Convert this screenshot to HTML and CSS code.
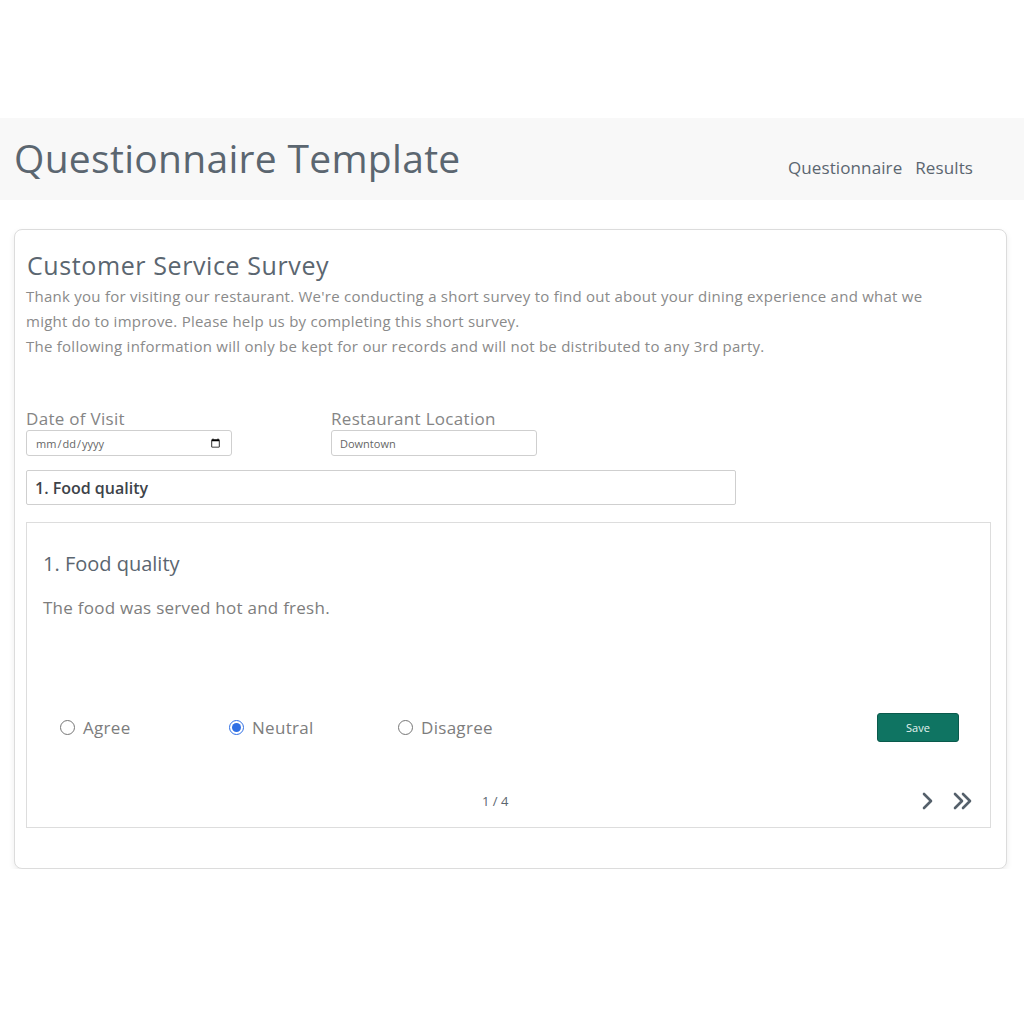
FILE: index.html
```html
<!DOCTYPE html>
<html lang="en">
<head>
<meta charset="utf-8">
<title>Questionnaire Template</title>
<link rel="stylesheet" href="styles.css">
</head>
<body>
<header class="topbar">
  <h1 class="brand">Questionnaire Template</h1>
  <nav class="nav">
    <a class="nav-link" href="#">Questionnaire</a>
    <a class="nav-link" href="#">Results</a>
  </nav>
</header>
<main class="card">
  <h2 class="survey-title">Customer Service Survey</h2>
  <p class="intro">Thank you for visiting our restaurant. We're conducting a short survey to find out about your dining experience and what we might do to improve. Please help us by completing this short survey.<br>The following information will only be kept for our records and will not be distributed to any 3rd party.</p>
  <div class="fields">
    <label class="field">
      <span class="field-label">Date of Visit</span>
      <input class="field-input" type="date">
    </label>
    <label class="field">
      <span class="field-label">Restaurant Location</span>
      <input class="field-input" type="text" value="Downtown">
    </label>
  </div>
  <div class="section-select">1. Food quality</div>
  <section class="question">
    <h3 class="q-title">1. Food quality</h3>
    <p class="q-text">The food was served hot and fresh.</p>
    <div class="answers">
      <label class="option"><input type="radio" name="a"><span>Agree</span></label>
      <label class="option"><input type="radio" name="a" checked><span>Neutral</span></label>
      <label class="option"><input type="radio" name="a"><span>Disagree</span></label>
      <button class="save" type="button">Save</button>
    </div>
    <div class="pager">
      <span class="page-count">1 / 4</span>
      <div class="pager-icons">
        <svg class="chev" width="14" height="20" viewBox="0 0 14 20"><path d="M3 3 L10 10 L3 17" fill="none" stroke="#55606b" stroke-width="2.6" stroke-linecap="round" stroke-linejoin="round"/></svg>
        <svg class="chev" width="22" height="20" viewBox="0 0 22 20"><path d="M3 3 L10 10 L3 17 M11 3 L18 10 L11 17" fill="none" stroke="#55606b" stroke-width="2.6" stroke-linecap="round" stroke-linejoin="round"/></svg>
      </div>
    </div>
  </section>
</main>
</body>
</html>
```
FILE: styles.css
```css
* { box-sizing: border-box; }
body {
  margin: 0;
  padding-top: 118px;
  background: #ffffff;
  font-family: "Open Sans", "DejaVu Sans", sans-serif;
  color: #5b6670;
}
.topbar {
  height: 82px;
  background: #f8f8f8;
  display: flex;
  align-items: center;
  justify-content: space-between;
  padding: 0 51px 0 14px;
}
.brand {
  margin: 0;
  font-size: 39px;
  font-weight: 500;
  color: #5b6670;
  letter-spacing: 0.3px;
  position: relative;
  top: -2px;
}
.nav {
  display: flex;
  gap: 13px;
  padding-top: 16px;
}
.nav-link {
  color: #5b6670;
  text-decoration: none;
  font-size: 17px;
  letter-spacing: 0.1px;
}
.card {
  margin: 29px 17px 0 14px;
  height: 640px;
  border: 1px solid #dcdcdc;
  border-radius: 8px;
  box-shadow: 0 3px 6px rgba(0,0,0,0.08);
  padding: 20px 15px 0 11px;
  background: #fff;
}
.survey-title {
  margin: 0 0 4px 1px;
  font-size: 25px;
  line-height: 30px;
  font-weight: 500;
  color: #5b6670;
  letter-spacing: 0.6px;
}
.intro {
  margin: 0;
  font-size: 15px;
  line-height: 25px;
  color: #8a8a8a;
  letter-spacing: 0.25px;
  max-width: 930px;
}
.fields {
  display: flex;
  gap: 99px;
  margin-top: 50px;
}
.field {
  display: flex;
  flex-direction: column;
  gap: 1px;
}
.field-label {
  font-size: 17px;
  line-height: 20px;
  color: #858585;
  letter-spacing: 0.3px;
}
.field-input {
  width: 206px;
  height: 26px;
  margin: 0;
  border: 1px solid #cfcfcf;
  border-radius: 3px;
  padding: 0 8px;
  font-family: inherit;
  font-size: 11px;
  color: #666;
  background: #fff;
}
.section-select {
  width: 710px;
  height: 35px;
  margin-top: 14px;
  border: 1px solid #cfcfcf;
  border-radius: 2px;
  padding: 0 8px;
  display: flex;
  align-items: center;
  font-size: 16px;
  font-weight: 600;
  color: #3d4349;
}
.question {
  margin-top: 17px;
  height: 306px;
  border: 1px solid #dddddd;
  padding: 28px 16px 0 16px;
  display: flex;
  flex-direction: column;
}
.q-title {
  margin: 0;
  font-size: 20px;
  line-height: 26px;
  font-weight: 500;
  color: #5b6670;
}
.q-text {
  margin: 20px 0 0;
  font-size: 17px;
  line-height: 22px;
  color: #7d7d7d;
  letter-spacing: 0.25px;
}
.answers {
  margin-top: 94px;
  display: flex;
  align-items: center;
  padding-left: 17px;
  padding-right: 15px;
  height: 29px;
}
.option {
  width: 169px;
  display: flex;
  align-items: center;
  gap: 8px;
  font-size: 17px;
  color: #7d7d7d;
  letter-spacing: 0.3px;
}
.option input {
  margin: 0;
  width: 15px;
  height: 15px;
  accent-color: #2f6fe4;
}
.save {
  margin-left: auto;
  width: 82px;
  height: 29px;
  border: 1px solid #0a5a4c;
  border-radius: 3px;
  background: #0f7462;
  color: #e6f3f0;
  font-family: inherit;
  font-size: 11px;
}
.pager {
  margin-top: 47px;
  display: flex;
  align-items: center;
  height: 24px;
}
.page-count {
  margin-left: 439px;
  font-size: 13px;
  color: #5b6670;
}
.pager-icons {
  margin-left: auto;
  display: flex;
  align-items: center;
  gap: 17px;
}
```
